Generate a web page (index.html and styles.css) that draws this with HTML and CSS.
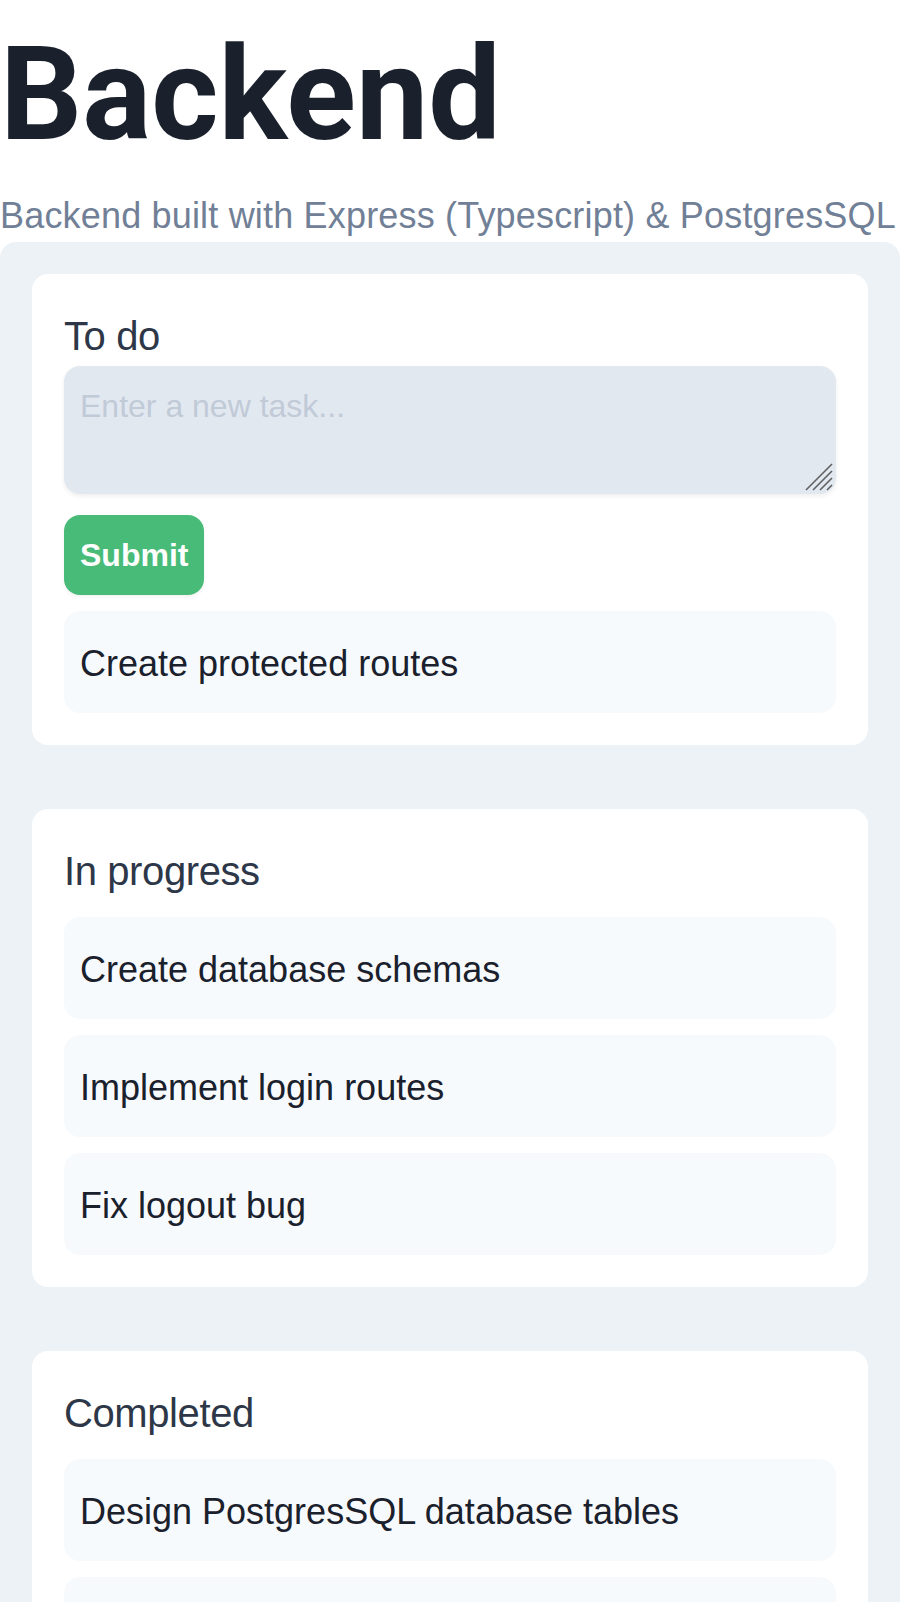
FILE: index.html
```html
<!DOCTYPE html>
<html lang="en">
<head>
<meta charset="utf-8">
<title>Backend</title>
<link rel="stylesheet" href="styles.css">
</head>
<body>
  <header class="page-header">
    <h1 class="page-title">Backend</h1>
    <p class="page-subtitle">Backend built with Express (Typescript) &amp; PostgresSQL</p>
  </header>
  <main class="board">
    <section class="column">
      <h2 class="column-title">To do</h2>
      <form class="task-form">
        <div class="input-wrap">
          <textarea class="task-input" placeholder="Enter a new task..."></textarea>
          <svg class="resize-grip" width="28" height="28" viewBox="0 0 28 28" aria-hidden="true">
            <line x1="1" y1="27" x2="27" y2="1" stroke="#5f5f5f" stroke-width="1.6"/>
            <line x1="8" y1="27" x2="27" y2="8" stroke="#5f5f5f" stroke-width="1.6"/>
            <line x1="15" y1="27" x2="27" y2="15" stroke="#5f5f5f" stroke-width="1.6"/>
            <line x1="22" y1="27" x2="27" y2="22" stroke="#5f5f5f" stroke-width="1.6"/>
          </svg>
        </div>
        <button type="button" class="submit-btn">Submit</button>
      </form>
      <div class="task">Create protected routes</div>
    </section>
    <section class="column">
      <h2 class="column-title">In progress</h2>
      <div class="task">Create database schemas</div>
      <div class="task">Implement login routes</div>
      <div class="task">Fix logout bug</div>
    </section>
    <section class="column">
      <h2 class="column-title">Completed</h2>
      <div class="task">Design PostgresSQL database tables</div>
      <div class="task task-empty"></div>
    </section>
  </main>
</body>
</html>
```

FILE: styles.css
```css
* {
  box-sizing: border-box;
}

html, body {
  margin: 0;
  padding: 0;
  background: #ffffff;
}

body {
  font-family: "Liberation Sans", Arial, sans-serif;
  color: #1a202c;
}

.page-header {
  display: block;
}

.page-title {
  margin: 0;
  font-family: Roboto, "Liberation Sans", sans-serif;
  font-weight: 700;
  font-size: 129px;
  line-height: 190px;
  color: #1a202c;
}

.page-subtitle {
  margin: 0;
  font-size: 36px;
  line-height: 52px;
  letter-spacing: 0.18px;
  color: #718096;
  white-space: nowrap;
}

.board {
  background: #edf2f7;
  border-radius: 16px 16px 0 0;
  padding: 32px;
}

.column {
  background: #ffffff;
  border-radius: 16px;
  padding: 32px;
  margin-bottom: 64px;
  display: flex;
  flex-direction: column;
}

.column-title {
  margin: 0;
  font-size: 40px;
  line-height: 60px;
  font-weight: 400;
  color: #2d3748;
  letter-spacing: -0.4px;
}

.task-form {
  display: flex;
  flex-direction: column;
  align-items: flex-start;
  margin: 0;
}

.input-wrap {
  position: relative;
  width: 100%;
}

.task-input {
  display: block;
  width: 100%;
  height: 128px;
  margin: 0;
  padding: 16px;
  border: none;
  border-radius: 16px;
  background: #e2e8f0;
  box-shadow: 0 2px 5px rgba(0, 0, 0, 0.07);
  font-family: "Liberation Sans", Arial, sans-serif;
  font-size: 32px;
  line-height: 48px;
  color: #2d3748;
  resize: none;
  outline: none;
}

.task-input::placeholder {
  color: #c1cad7;
}

.resize-grip {
  position: absolute;
  right: 3px;
  bottom: 3px;
  pointer-events: none;
}

.submit-btn {
  margin-top: 21px;
  padding: 16px;
  border: none;
  border-radius: 16px;
  background: #48bb78;
  color: #ffffff;
  font-family: "Liberation Sans", Arial, sans-serif;
  font-weight: 700;
  font-size: 32px;
  line-height: 48px;
  box-shadow: 0 2px 4px rgba(0, 0, 0, 0.06);
  cursor: pointer;
}

.task {
  margin-top: 16px;
  padding: 26px 16px 22px;
  border-radius: 16px;
  background: #f7fafc;
  font-size: 36px;
  line-height: 54px;
  color: #1a202c;
}

.task-empty {
  min-height: 102px;
}
```
